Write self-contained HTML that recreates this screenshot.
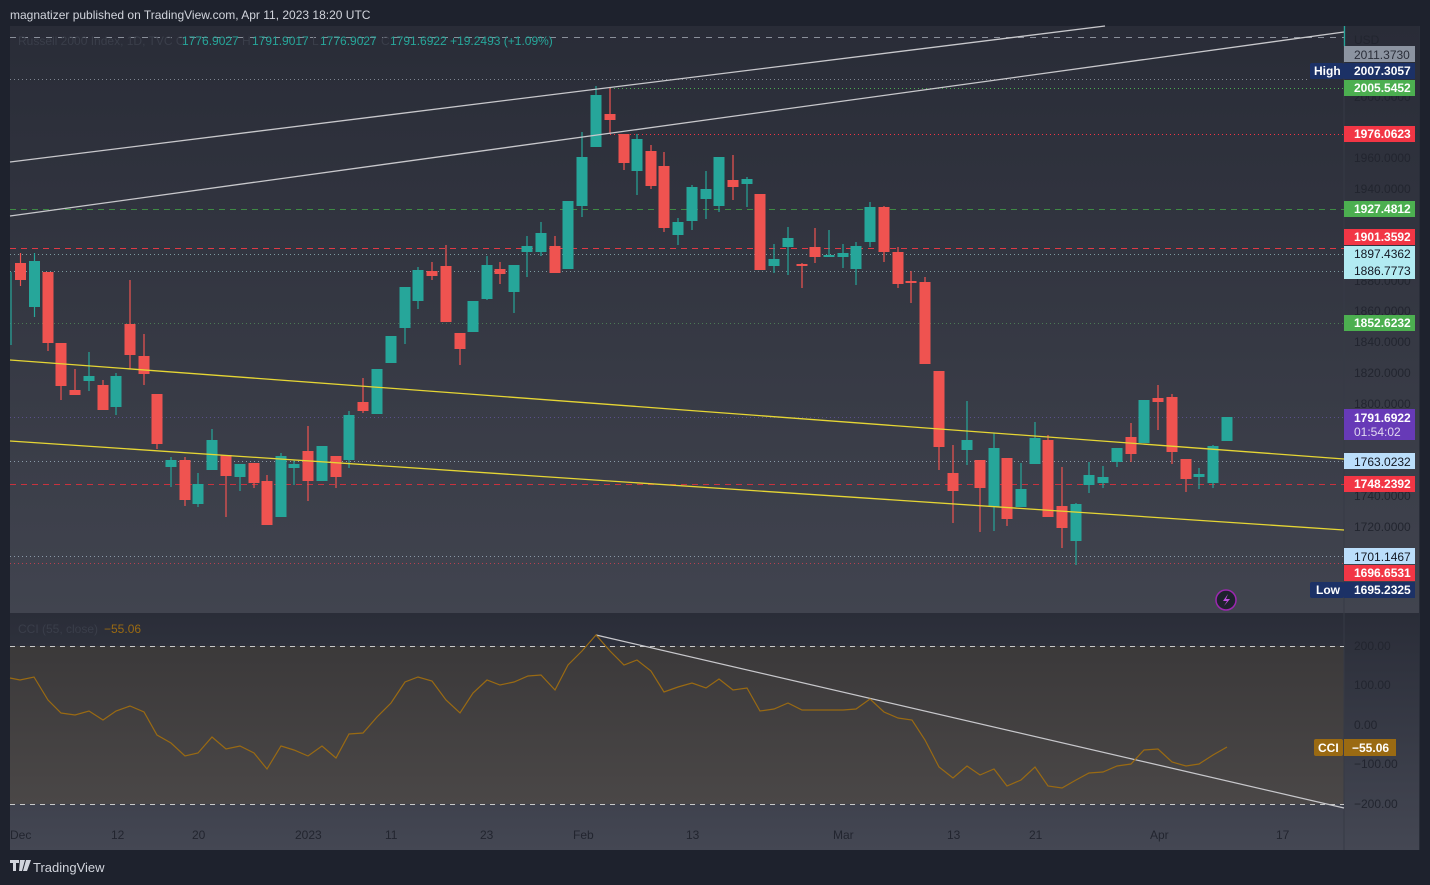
<!DOCTYPE html>
<html><head><meta charset="utf-8">
<style>
html,body{margin:0;padding:0;background:#1e222d;width:1430px;height:885px;overflow:hidden;font-family:"Liberation Sans",sans-serif}
svg{position:absolute;left:0;top:0}
</style></head><body>
<svg id="s" width="1430" height="885" xmlns="http://www.w3.org/2000/svg" font-family="Liberation Sans, sans-serif">
<defs>
<linearGradient id="gm" x1="0" y1="0" x2="0" y2="1"><stop offset="0" stop-color="#292c37"/><stop offset="1" stop-color="#41444f"/></linearGradient>
<linearGradient id="gi" x1="0" y1="0" x2="0" y2="1"><stop offset="0" stop-color="#2a2d38"/><stop offset="1" stop-color="#444753"/></linearGradient>
<linearGradient id="gb" x1="0" y1="0" x2="0" y2="1"><stop offset="0" stop-color="#3b393a"/><stop offset="1" stop-color="#4a4747"/></linearGradient>
</defs>
<rect x="0" y="0" width="1430" height="885" fill="#1e222d"/>
<text x="10" y="19" font-size="12" fill="#d1d4dc">magnatizer published on TradingView.com, Apr 11, 2023 18:20 UTC</text>
<rect x="10" y="26" width="1410" height="587" fill="url(#gm)"/>
<rect x="10" y="613" width="1410" height="237" fill="url(#gi)"/>
<rect x="10" y="646" width="1334" height="158" fill="url(#gb)"/>
<line x1="1344" y1="26" x2="1344" y2="850" stroke="#363a45" stroke-width="1"/>
<line x1="1419.5" y1="26" x2="1419.5" y2="850" stroke="#2a2e39"/>
<g id="hl" stroke-width="1" fill="none">
<line x1="10" y1="37.5" x2="1344" y2="37.5" stroke="#8a8f9a" stroke-dasharray="6,6"/>
<line x1="10" y1="79.5" x2="1310" y2="79.5" stroke="#7f8590" stroke-dasharray="1,3"/>
<line x1="610" y1="88.5" x2="1344" y2="88.5" stroke="#4caf50" stroke-dasharray="1,3"/>
<line x1="610" y1="134.5" x2="1344" y2="134.5" stroke="#f23645" stroke-dasharray="1,3"/>
<line x1="10" y1="209.5" x2="1344" y2="209.5" stroke="#3f8a45" stroke-dasharray="6,5"/>
<line x1="10" y1="248.5" x2="1344" y2="248.5" stroke="#e03a45" stroke-dasharray="6,5"/>
<line x1="10" y1="254.5" x2="1344" y2="254.5" stroke="#7d9aa0" stroke-dasharray="1,3"/>
<line x1="10" y1="271.5" x2="1344" y2="271.5" stroke="#7d9aa0" stroke-dasharray="1,3"/>
<line x1="10" y1="323.5" x2="1344" y2="323.5" stroke="#4b7a55" stroke-dasharray="1,3"/>
<line x1="10" y1="417.5" x2="1344" y2="417.5" stroke="#5a4f8a" stroke-dasharray="1,3"/>
<line x1="10" y1="461.5" x2="1344" y2="461.5" stroke="#8a9aa8" stroke-dasharray="1,3"/>
<line x1="10" y1="484.5" x2="1344" y2="484.5" stroke="#c8323e" stroke-dasharray="6,5"/>
<line x1="10" y1="556.5" x2="1344" y2="556.5" stroke="#8a9aa8" stroke-dasharray="1,3"/>
<line x1="10" y1="563.5" x2="1344" y2="563.5" stroke="#b84050" stroke-dasharray="1,3"/>
<line x1="10" y1="646.5" x2="1344" y2="646.5" stroke="#c8c8c8" stroke-dasharray="5,5"/>
<line x1="10" y1="804.5" x2="1344" y2="804.5" stroke="#c8c8c8" stroke-dasharray="5,5"/>
</g>
<g id="candles"></g>
<g fill="none" stroke-width="1.3">
<line x1="10" y1="162" x2="1105" y2="26" stroke="#c8c8cc"/>
<line x1="10" y1="216" x2="1344" y2="32" stroke="#c8c8cc"/>
<line x1="10" y1="360" x2="1344" y2="459" stroke="#e6d634"/>
<line x1="10" y1="441" x2="1344" y2="530" stroke="#e6d634"/>
<line x1="596" y1="635" x2="1344" y2="808" stroke="#c8c8cc"/>
<line x1="1344.5" y1="26" x2="1344.5" y2="46" stroke="#26a69a"/>
</g>
<polyline id="cci" fill="none" stroke="#9a6a12" stroke-width="1.2"/>
<text x="18" y="45" font-size="12" fill="#3a3e4a">Russell 2000 Index, 1D, TVC  O</text>
<text x="182" y="45" font-size="12" fill="#26a69a">1776.9027</text>
<text x="242" y="45" font-size="12" fill="#3a3e4a">H</text>
<text x="252" y="45" font-size="12" fill="#26a69a">1791.9017</text>
<text x="312" y="45" font-size="12" fill="#3a3e4a">L</text>
<text x="320" y="45" font-size="12" fill="#26a69a">1776.9027</text>
<text x="381" y="45" font-size="12" fill="#3a3e4a">C</text>
<text x="390" y="45" font-size="12" fill="#26a69a">1791.6922  +19.2493 (+1.09%)</text>
<text x="18" y="633" font-size="12" fill="#3a3e4a">CCI (55, close)</text>
<text x="104" y="633" font-size="12" fill="#9a6a12">−55.06</text>
<g font-size="12" fill="#22252f">
<text x="1354" y="44">USD</text>
<text x="1354" y="101">2000.0000</text>
<text x="1354" y="162">1960.0000</text>
<text x="1354" y="193">1940.0000</text>
<text x="1354" y="285">1880.0000</text>
<text x="1354" y="315">1860.0000</text>
<text x="1354" y="346">1840.0000</text>
<text x="1354" y="377">1820.0000</text>
<text x="1354" y="408">1800.0000</text>
<text x="1354" y="500">1740.0000</text>
<text x="1354" y="531">1720.0000</text>
<text x="1354" y="650">200.00</text>
<text x="1354" y="689">100.00</text>
<text x="1354" y="729">0.00</text>
<text x="1354" y="768">−100.00</text>
<text x="1354" y="808">−200.00</text>
<text x="10" y="839">Dec</text>
<text x="111" y="839">12</text>
<text x="192" y="839">20</text>
<text x="295" y="839">2023</text>
<text x="385" y="839">11</text>
<text x="480" y="839">23</text>
<text x="573" y="839">Feb</text>
<text x="686" y="839">13</text>
<text x="833" y="839">Mar</text>
<text x="947" y="839">13</text>
<text x="1029" y="839">21</text>
<text x="1150" y="839">Apr</text>
<text x="1276" y="839">17</text>
</g>
<rect x="1344" y="46" width="71" height="16" fill="#cfd8e8" opacity="0.6"/>
<text x="1354" y="59" font-size="12" fill="#2a2e39">2011.3730</text>
<g font-size="12" font-weight="bold">
<rect x="1310" y="63" width="34" height="16" rx="2" fill="#1c3166"/><text x="1314" y="75" fill="#fff">High</text>
<rect x="1344" y="63" width="71" height="16" fill="#1c3166"/><text x="1354" y="75" fill="#fff">2007.3057</text>
<rect x="1344" y="80" width="71" height="16" fill="#4caf50"/><text x="1354" y="92" fill="#fff">2005.5452</text>
<rect x="1344" y="126" width="71" height="16" fill="#f23645"/><text x="1354" y="138" fill="#fff">1976.0623</text>
<rect x="1344" y="201" width="71" height="16" fill="#4caf50"/><text x="1354" y="213" fill="#fff">1927.4812</text>
<rect x="1344" y="229" width="71" height="16" fill="#f23645"/><text x="1354" y="241" fill="#fff">1901.3592</text>
<rect x="1344" y="246" width="71" height="33" fill="#b2ebf2"/>
<text x="1354" y="258" fill="#131722" font-weight="normal">1897.4362</text>
<text x="1354" y="275" fill="#131722" font-weight="normal">1886.7773</text>
<rect x="1344" y="315" width="71" height="16" fill="#4caf50"/><text x="1354" y="327" fill="#fff">1852.6232</text>
<rect x="1344" y="409" width="71" height="31" fill="#673ab7"/><text x="1354" y="422" fill="#fff">1791.6922</text><text x="1354" y="436" fill="#e0d8f0" font-weight="normal">01:54:02</text>
<rect x="1344" y="453" width="71" height="16" fill="#bbdefb"/><text x="1354" y="466" fill="#131722" font-weight="normal">1763.0232</text>
<rect x="1344" y="476" width="71" height="16" fill="#f23645"/><text x="1354" y="488" fill="#fff">1748.2392</text>
<rect x="1344" y="548" width="71" height="16" fill="#bbdefb"/><text x="1354" y="561" fill="#131722" font-weight="normal">1701.1467</text>
<rect x="1344" y="565" width="71" height="16" fill="#f23645"/><text x="1354" y="577" fill="#fff">1696.6531</text>
<rect x="1310" y="582" width="34" height="16" rx="2" fill="#1c3166"/><text x="1316" y="594" fill="#fff">Low</text>
<rect x="1344" y="582" width="71" height="16" fill="#1c3166"/><text x="1354" y="594" fill="#fff">1695.2325</text>
<rect x="1314" y="739" width="29" height="17" rx="2" fill="#9a6a12"/><text x="1318" y="752" fill="#fff">CCI</text>
<rect x="1344" y="739" width="52" height="17" fill="#9a6a12"/><text x="1352" y="752" fill="#fff">−55.06</text>
</g>
<circle cx="1226" cy="600" r="10" fill="#1e222d" stroke="#9c27b0" stroke-width="1.5"/>
<path d="M1228 594 L1223 601 L1227 601 L1224 606 L1230 599 L1226 599 Z" fill="#c050e0"/>
<g fill="#d1d4dc">
<path d="M10 860h9v3h-3v8h-3v-8h-3z M20 860h5l-3 11h-3z M26 860h5l-4 11h-4z"/>
</g>
<text x="33" y="872" font-size="13" fill="#d1d4dc">TradingView</text>
</svg>
<script>
var C=[[11,272,345,272,345,'g'],[20.5,263,280,253,286,'r'],[34.5,261,307,253,317,'g'],[48,272,343,272,351,'r'],[61,343,386,343,400,'r'],[75,390,395,369,395,'r'],[89,376,381,352,391,'g'],[103,385,410,380,410,'r'],[116,376,407,373,415,'g'],[130,324,355,280,369,'r'],[144,356,374,334,385,'r'],[157,394,444,394,449,'r'],[171,460,467,457,487,'g'],[185,460,500,457,506,'r'],[198,484,504,473,507,'g'],[212,440,470,429,470,'g'],[226,455,476,455,517,'r'],[240,464,477,464,491,'g'],[254,463,483,463,488,'r'],[267,481,525,475,525,'r'],[281,456,517,453,517,'g'],[294,464,468,460,485,'g'],[308,451,481,426,501,'r'],[322,446,481,446,481,'g'],[336,456,477,456,488,'r'],[349,415,460,411,468,'g'],[363,402,411,378,413,'r'],[377,369,414,369,414,'g'],[391,336,363,336,363,'g'],[405,287,328,287,344,'g'],[418,270,301,267,309,'g'],[432,271,276,262,280,'r'],[446,266,322,245,322,'r'],[460,333,349,333,365,'r'],[473,301,332,301,332,'g'],[487,265,299,256,300,'g'],[500,269,274,262,284,'r'],[514,265,292,265,313,'g'],[527,246,252,236,277,'g'],[541,233,252,222,256,'g'],[555,246,273,236,273,'r'],[568,201,269,201,269,'g'],[582,157,206,132,217,'g'],[596,95,147,86,147,'g'],[610,114,120,88,134,'r'],[624,134,163,134,170,'r'],[637,139,171,134,195,'g'],[651,151,186,145,189,'r'],[664,166,228,152,232,'r'],[678,222,235,218,245,'g'],[692,187,221,185,230,'g'],[706,189,199,171,219,'g'],[719,157,206,157,212,'g'],[733,180,187,155,200,'r'],[747,179,184,177,207,'g'],[760,194,270,194,270,'r'],[774,259,266,244,273,'g'],[788,238,247,227,275,'g'],[802,264,266,263,288,'r'],[815,247,257,228,263,'r'],[829,255,257,230,257,'g'],[843,253,257,244,268,'g'],[856,246,269,242,285,'g'],[870,207,242,202,247,'g'],[884,207,252,206,262,'r'],[898,252,284,247,288,'r'],[911,281,283,271,303,'r'],[925,282,364,277,364,'r'],[939,371,447,371,470,'r'],[953,473,491,445,523,'r'],[967,440,450,401,465,'g'],[980,460,488,460,532,'r'],[994,448,507,433,531,'g'],[1007,458,519,458,526,'r'],[1021,489,507,463,507,'g'],[1035,438,464,422,464,'g'],[1048,440,517,435,517,'r'],[1062,506,528,467,548,'r'],[1076,504,541,503,565,'g'],[1089,475,485,462,493,'g'],[1103,477,483,466,488,'g'],[1117,448,462,448,467,'g'],[1131,437,454,423,462,'r'],[1144,400,443,400,443,'g'],[1158,398,402,385,430,'r'],[1172,397,452,394,464,'r'],[1186,459,479,459,492,'r'],[1199,474,477,468,489,'g'],[1213,446,483,445,488,'g'],[1227,417,441,417,441,'g']];
var h='';C.forEach(function(c){var col=c[5]=='g'?'#26a69a':'#ef5350';var w=c[0]<12?1:11;
h+='<line x1="'+c[0]+'" x2="'+c[0]+'" y1="'+c[3]+'" y2="'+c[4]+'" stroke="'+col+'" stroke-width="1.2"/>';
if(w>1)h+='<rect x="'+(c[0]-5.5)+'" y="'+c[1]+'" width="11" height="'+Math.max(2,c[2]-c[1])+'" fill="'+col+'"/>';});
document.getElementById('candles').innerHTML=h;
var P=[[10,678],[20,680],[34,677],[48,700],[61,713],[75,715],[89,711],[103,720],[116,711],[130,706],[144,712],[157,735],[171,743],[185,756],[198,753],[212,737],[226,749],[240,746],[254,753],[267,769],[281,746],[294,750],[308,756],[322,746],[336,758],[349,734],[363,733],[377,717],[391,703],[405,682],[418,677],[432,681],[446,700],[460,713],[473,693],[487,680],[500,685],[514,682],[528,676],[541,675],[555,690],[568,665],[582,651],[596,635],[610,651],[624,665],[637,660],[651,671],[664,692],[678,687],[692,683],[706,688],[719,679],[733,690],[747,688],[760,711],[774,709],[788,703],[802,710],[815,710],[829,710],[843,710],[856,709],[870,699],[884,712],[898,718],[912,720],[925,740],[939,767],[953,778],[967,766],[980,775],[994,769],[1007,786],[1021,780],[1035,767],[1048,786],[1062,788],[1076,780],[1089,773],[1103,772],[1117,766],[1131,764],[1144,750],[1158,749],[1172,762],[1186,766],[1199,764],[1213,755],[1227,747]];
document.getElementById('cci').setAttribute('points',P.map(function(p){return p.join(',')}).join(' '));
</script>
</body></html>
